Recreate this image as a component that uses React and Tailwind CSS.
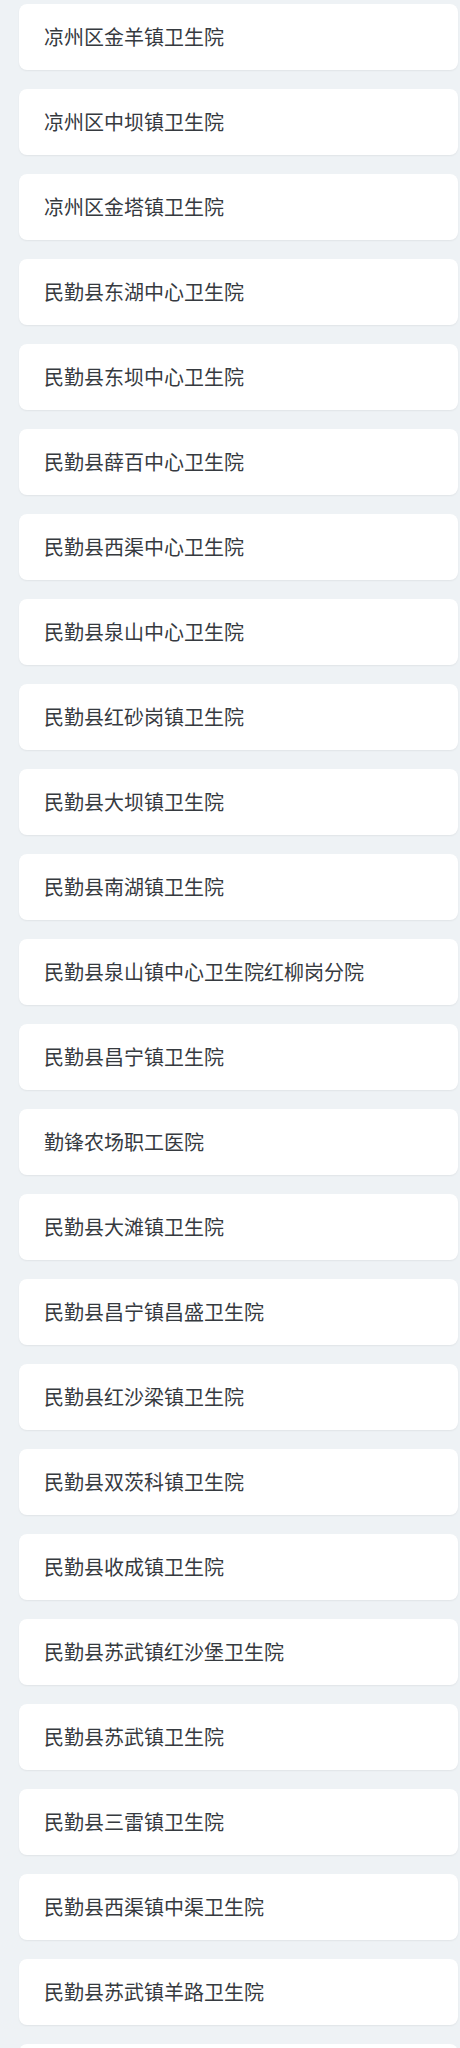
import React from 'react';

const hospitals = [
  '凉州区金羊镇卫生院',
  '凉州区中坝镇卫生院',
  '凉州区金塔镇卫生院',
  '民勤县东湖中心卫生院',
  '民勤县东坝中心卫生院',
  '民勤县薛百中心卫生院',
  '民勤县西渠中心卫生院',
  '民勤县泉山中心卫生院',
  '民勤县红砂岗镇卫生院',
  '民勤县大坝镇卫生院',
  '民勤县南湖镇卫生院',
  '民勤县泉山镇中心卫生院红柳岗分院',
  '民勤县昌宁镇卫生院',
  '勤锋农场职工医院',
  '民勤县大滩镇卫生院',
  '民勤县昌宁镇昌盛卫生院',
  '民勤县红沙梁镇卫生院',
  '民勤县双茨科镇卫生院',
  '民勤县收成镇卫生院',
  '民勤县苏武镇红沙堡卫生院',
  '民勤县苏武镇卫生院',
  '民勤县三雷镇卫生院',
  '民勤县西渠镇中渠卫生院',
  '民勤县苏武镇羊路卫生院',
];

const App = () => {
  return (
    <div className="min-h-screen bg-[#eef2f5] pt-[4px] pb-4">
      {/* List */}
      <div className="flex flex-col gap-[19px] pl-[19px] pr-[2px]">
        {hospitals.map((name) => (
          <div
            key={name}
            className="h-[66px] flex items-center bg-white rounded-[8px] pl-[25px] shadow-[0_1px_2px_rgba(0,0,0,0.06)]"
          >
            <span
              className="text-[20px] text-[#363a3f] leading-none"
              style={{ fontFamily: '"Noto Sans CJK SC", "Noto Sans", sans-serif' }}
            >
              {name}
            </span>
          </div>
        ))}
        {/* next card, cut off by the bottom edge */}
        <div className="h-[66px] bg-white rounded-[8px] shadow-[0_1px_2px_rgba(0,0,0,0.06)]" />
      </div>
    </div>
  );
};

export default App;
